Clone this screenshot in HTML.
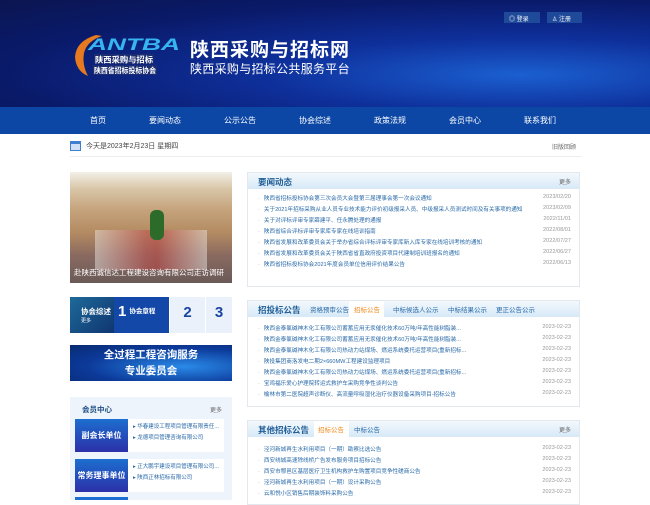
<!DOCTYPE html>
<html><head><meta charset="utf-8">
<style>
*{margin:0;padding:0;box-sizing:border-box}
body{width:650px;height:500px;overflow:hidden;background:#fff;font-family:"Liberation Sans","Noto Sans CJK SC",sans-serif;position:relative}
.hdr{position:absolute;left:0;top:0;width:650px;height:107px;background:radial-gradient(ellipse at 80% 70%,#1b5fd0 0%,#0e2f9a 35%,#0a1a6a 70%,#0b1550 100%)}
.nav{position:absolute;left:0;top:107px;width:650px;height:27px;background:#0c47a6;color:#fff;font-size:8px}
.nav span{position:absolute;top:8px}
.abs{position:absolute}
.box{position:absolute;border:1px solid #e2e8ee;background:#fff}
.bh{height:16px;background:linear-gradient(#f3f9fd,#d6e9f7);position:relative}
.bh b{position:absolute;left:10px;top:3px;font-size:8.5px;color:#1f5d96}
.more{position:absolute;right:8px;top:4px;font-size:6px;color:#666}
.li{position:absolute;left:10px;right:8px;font-size:5.6px;color:#2a6aa8;white-space:nowrap}
.li i{font-style:normal;color:#999;margin-right:4px}
.li s{text-decoration:none;position:absolute;right:0;color:#999}
.tab{position:absolute;top:3px;font-size:6.5px;color:#2a6aa8}
</style></head><body>
<div class="hdr"></div>
<svg class="abs" style="left:72px;top:33px" width="112" height="44"><path d="M24 2 Q4 8 3 24 Q4 38 16 43 Q10 32 12 20 Q15 8 30 3Z" fill="#e77a1f"/><text x="16" y="17" font-size="17" font-style="italic" font-weight="bold" fill="#36b5f0" font-family="Liberation Sans" textLength="92" lengthAdjust="spacingAndGlyphs">ANTBA</text><rect x="22" y="21" width="60" height="10" fill="#1b2d70"/><text x="23" y="29.5" font-size="8" fill="#fff" font-weight="bold" font-family="Noto Sans CJK SC" textLength="58" lengthAdjust="spacingAndGlyphs">陕西采购与招标</text><rect x="21" y="32" width="64" height="10" fill="#1b2d70"/><text x="22" y="40" font-size="7.5" fill="#fff" font-weight="bold" font-family="Noto Sans CJK SC" textLength="62" lengthAdjust="spacingAndGlyphs">陕西省招标投标协会</text></svg>
<div class="abs" style="left:190px;top:35px;font-size:19px;font-weight:bold;color:#fff;letter-spacing:1px">陕西采购与招标网</div>
<div class="abs" style="left:190px;top:60px;font-size:12px;color:#fff;letter-spacing:0.3px">陕西采购与招标公共服务平台</div>
<div class="abs" style="left:504px;top:12px;width:36px;height:11px;background:#1f4a9a;color:#fff;font-size:6px;padding:2px 0 0 5px">◎ 登录</div>
<div class="abs" style="left:547px;top:12px;width:35px;height:11px;background:#1f4a9a;color:#fff;font-size:6px;padding:2px 0 0 5px">♙ 注册</div>
<div class="nav"><span style="left:90px">首页</span><span style="left:149px">要闻动态</span><span style="left:224px">公示公告</span><span style="left:299px">协会综述</span><span style="left:374px">政策法规</span><span style="left:449px">会员中心</span><span style="left:524px">联系我们</span></div>
<svg class="abs" style="left:70px;top:140px" width="11" height="11"><rect x="0" y="1" width="11" height="10" fill="#3f7fd0"/><rect x="1" y="4" width="9" height="6" fill="#cfe0f5"/></svg>
<div class="abs" style="left:86px;top:141px;font-size:7px;color:#444">今天是2023年2月23日 星期四</div>
<div class="abs" style="left:552px;top:142px;font-size:6px;color:#666">旧版回顾</div>
<div class="abs" style="left:70px;top:156px;width:512px;height:1px;background:#eee"></div>

<div class="abs" style="left:70px;top:172px;width:162px;height:111px;background:linear-gradient(#f2efe8 0%,#d9c6a8 15%,#c4a27a 35%,#b38a62 55%,#8a6a60 75%,#6a5a58 100%)"></div>
<div class="abs" style="left:95px;top:230px;width:112px;height:40px;background:linear-gradient(90deg,#e8e4e0 0%,#c05050 45%,#c04040 55%,#e8e4e0 100%);opacity:.5"></div>
<div class="abs" style="left:150px;top:210px;width:14px;height:30px;background:#2d6b2a;border-radius:6px"></div>
<div class="abs" style="left:74px;top:267px;font-size:7.5px;color:#fff;white-space:nowrap">赴陕西诚信达工程建设咨询有限公司走访调研</div>

<div class="abs" style="left:70px;top:297px;width:44px;height:36px;background:linear-gradient(135deg,#1e6a9a,#0f3570);color:#fff;font-size:7.5px;font-weight:bold;padding:9px 0 0 11px">协会综述<div style="font-size:5px;font-weight:normal">更多</div></div>
<div class="abs" style="left:114px;top:297px;width:55px;height:36px;background:#1348a8;color:#fff;padding:6px 0 0 4px;font-size:15px;font-weight:bold">1<span style="font-size:6.5px;margin-left:3px;vertical-align:3px">协会章程</span></div>
<div class="abs" style="left:170px;top:297px;width:35px;height:36px;background:#eaf1fb;color:#1a46a0;font-size:15px;font-weight:bold;text-align:center;padding-top:7px">2</div>
<div class="abs" style="left:206px;top:297px;width:26px;height:36px;background:#eaf1fb;color:#1a46a0;font-size:15px;font-weight:bold;text-align:center;padding-top:7px">3</div>

<div class="abs" style="left:70px;top:345px;width:162px;height:36px;background:radial-gradient(ellipse at 70% 60%,#2a8ae8,#0c3a9a 60%,#082a70);color:#fff;font-weight:bold;text-align:center;font-size:10.5px;line-height:16px;padding-top:2px">全过程工程咨询服务<br>专业委员会</div>

<div class="abs" style="left:70px;top:397px;width:162px;height:103px;background:#eef4fb"></div>
<div class="abs" style="left:82px;top:404px;font-size:7.5px;color:#1f4f86;font-weight:bold">会员中心</div>
<div class="abs" style="left:210px;top:405px;font-size:6px;color:#666">更多</div>
<div class="abs" style="left:75px;top:419px;width:149px;height:33px;background:#fff"></div>
<div class="abs" style="left:75px;top:419px;width:53px;height:33px;background:linear-gradient(#1c6fd0,#2c2fa8);color:#fff;font-size:8px;font-weight:bold;text-align:center;padding-top:11px">副会长单位</div>
<div class="abs" style="left:133px;top:422px;font-size:5.5px;color:#2a6aa8;line-height:11px">▸ 华春建设工程项目管理有限责任...<br>▸ 龙德项目管理咨询有限公司</div>
<div class="abs" style="left:75px;top:459px;width:149px;height:33px;background:#fff"></div>
<div class="abs" style="left:75px;top:459px;width:53px;height:33px;background:linear-gradient(#1c6fd0,#2c2fa8);color:#fff;font-size:8px;font-weight:bold;text-align:center;padding-top:11px">常务理事单位</div>
<div class="abs" style="left:133px;top:462px;font-size:5.5px;color:#2a6aa8;line-height:11px">▸ 正大鹏宇建设项目管理有限公司...<br>▸ 陕西正林招标有限公司</div>
<div class="abs" style="left:75px;top:497px;width:53px;height:3px;background:#1c6fd0"></div>

<div class="box" style="left:247px;top:172px;width:333px;height:115px">
<div class="bh"><b>要闻动态</b><span class="more">更多</span></div>
<div class="li" style="top:21px"><i>·</i>陕西省招标投标协会第三次会员大会暨第三届理事会第一次会议通知<s>2023/02/20</s></div>
<div class="li" style="top:32px"><i>·</i>关于2021年招标采购从业人员专业技术能力评价初级报采人员、中级报采人员测试时间及有关事项的通知<s>2023/02/09</s></div>
<div class="li" style="top:43px"><i>·</i>关于对评标评审专家薛建平、任永腾处理的通报<s>2022/11/01</s></div>
<div class="li" style="top:54px"><i>·</i>陕西省综合评标评审专家库专家在线培训指南<s>2022/08/01</s></div>
<div class="li" style="top:65px"><i>·</i>陕西省发展和改革委员会关于举办省综合评标评审专家库新入库专家在线培训考核的通知<s>2022/07/27</s></div>
<div class="li" style="top:76px"><i>·</i>陕西省发展和改革委员会关于陕西省省直政府投资项目代建制培训班报名的通知<s>2022/06/27</s></div>
<div class="li" style="top:87px"><i>·</i>陕西省招标投标协会2021年度会员单位信用评价结果公告<s>2022/06/13</s></div>
</div>

<div class="box" style="left:247px;top:300px;width:333px;height:107px">
<div class="bh"><b>招投标公告</b>
<span class="tab" style="left:62px">资格预审公告</span>
<span class="abs" style="left:101px;top:0;width:35px;height:16px;background:#fff"></span><span class="tab" style="left:106px;color:#f08a1c">招标公告</span>
<span class="tab" style="left:145px">中标候选人公示</span>
<span class="tab" style="left:200px">中标结果公示</span>
<span class="tab" style="left:248px">更正公告公示</span></div>
<div class="li" style="top:23px"><i>·</i>陕西金泰氯碱神木化工有限公司蓄蓄应用无汞催化技术60万吨/年高性能树脂装...<s>2023-02-23</s></div>
<div class="li" style="top:34px"><i>·</i>陕西金泰氯碱神木化工有限公司蓄蓄应用无汞催化技术60万吨/年高性能树脂装...<s>2023-02-23</s></div>
<div class="li" style="top:45px"><i>·</i>陕西金泰氯碱神木化工有限公司热动力站煤场、燃运系统委托运营项目(重新招标...<s>2023-02-23</s></div>
<div class="li" style="top:56px"><i>·</i>陕投集团商洛发电二期2×660MW工程建设监理项目<s>2023-02-23</s></div>
<div class="li" style="top:67px"><i>·</i>陕西金泰氯碱神木化工有限公司热动力站煤场、燃运系统委托运营项目(重新招标...<s>2023-02-23</s></div>
<div class="li" style="top:78px"><i>·</i>宝鸡福乐爱心护理院转运式救护车采购竞争性谈判公告<s>2023-02-23</s></div>
<div class="li" style="top:89px"><i>·</i>榆林市第二医院超声诊断仪、高流量呼吸湿化治疗仪器设备采购项目-招标公告<s>2023-02-23</s></div>
</div>

<div class="box" style="left:247px;top:420px;width:333px;height:85px">
<div class="bh"><b>其他招标公告</b>
<span class="abs" style="left:66px;top:0;width:35px;height:16px;background:#fff"></span><span class="tab" style="left:70px;color:#f08a1c">招标公告</span>
<span class="tab" style="left:106px">中标公告</span><span class="more">更多</span></div>
<div class="li" style="top:24px"><i>·</i>泾河新城再生水利用项目（一期）勘察比选公告<s>2023-02-23</s></div>
<div class="li" style="top:35px"><i>·</i>西安绕城高速除线桥广告发布服务项目招标公告<s>2023-02-23</s></div>
<div class="li" style="top:46px"><i>·</i>西安市鄠邑区基层医疗卫生机构救护车购置项目竞争性磋商公告<s>2023-02-23</s></div>
<div class="li" style="top:57px"><i>·</i>泾河新城再生水利用项目（一期）设计采购公告<s>2023-02-23</s></div>
<div class="li" style="top:68px"><i>·</i>云和悦小区销售后期装饰料采购公告<s>2023-02-23</s></div>
</div>
</body></html>
